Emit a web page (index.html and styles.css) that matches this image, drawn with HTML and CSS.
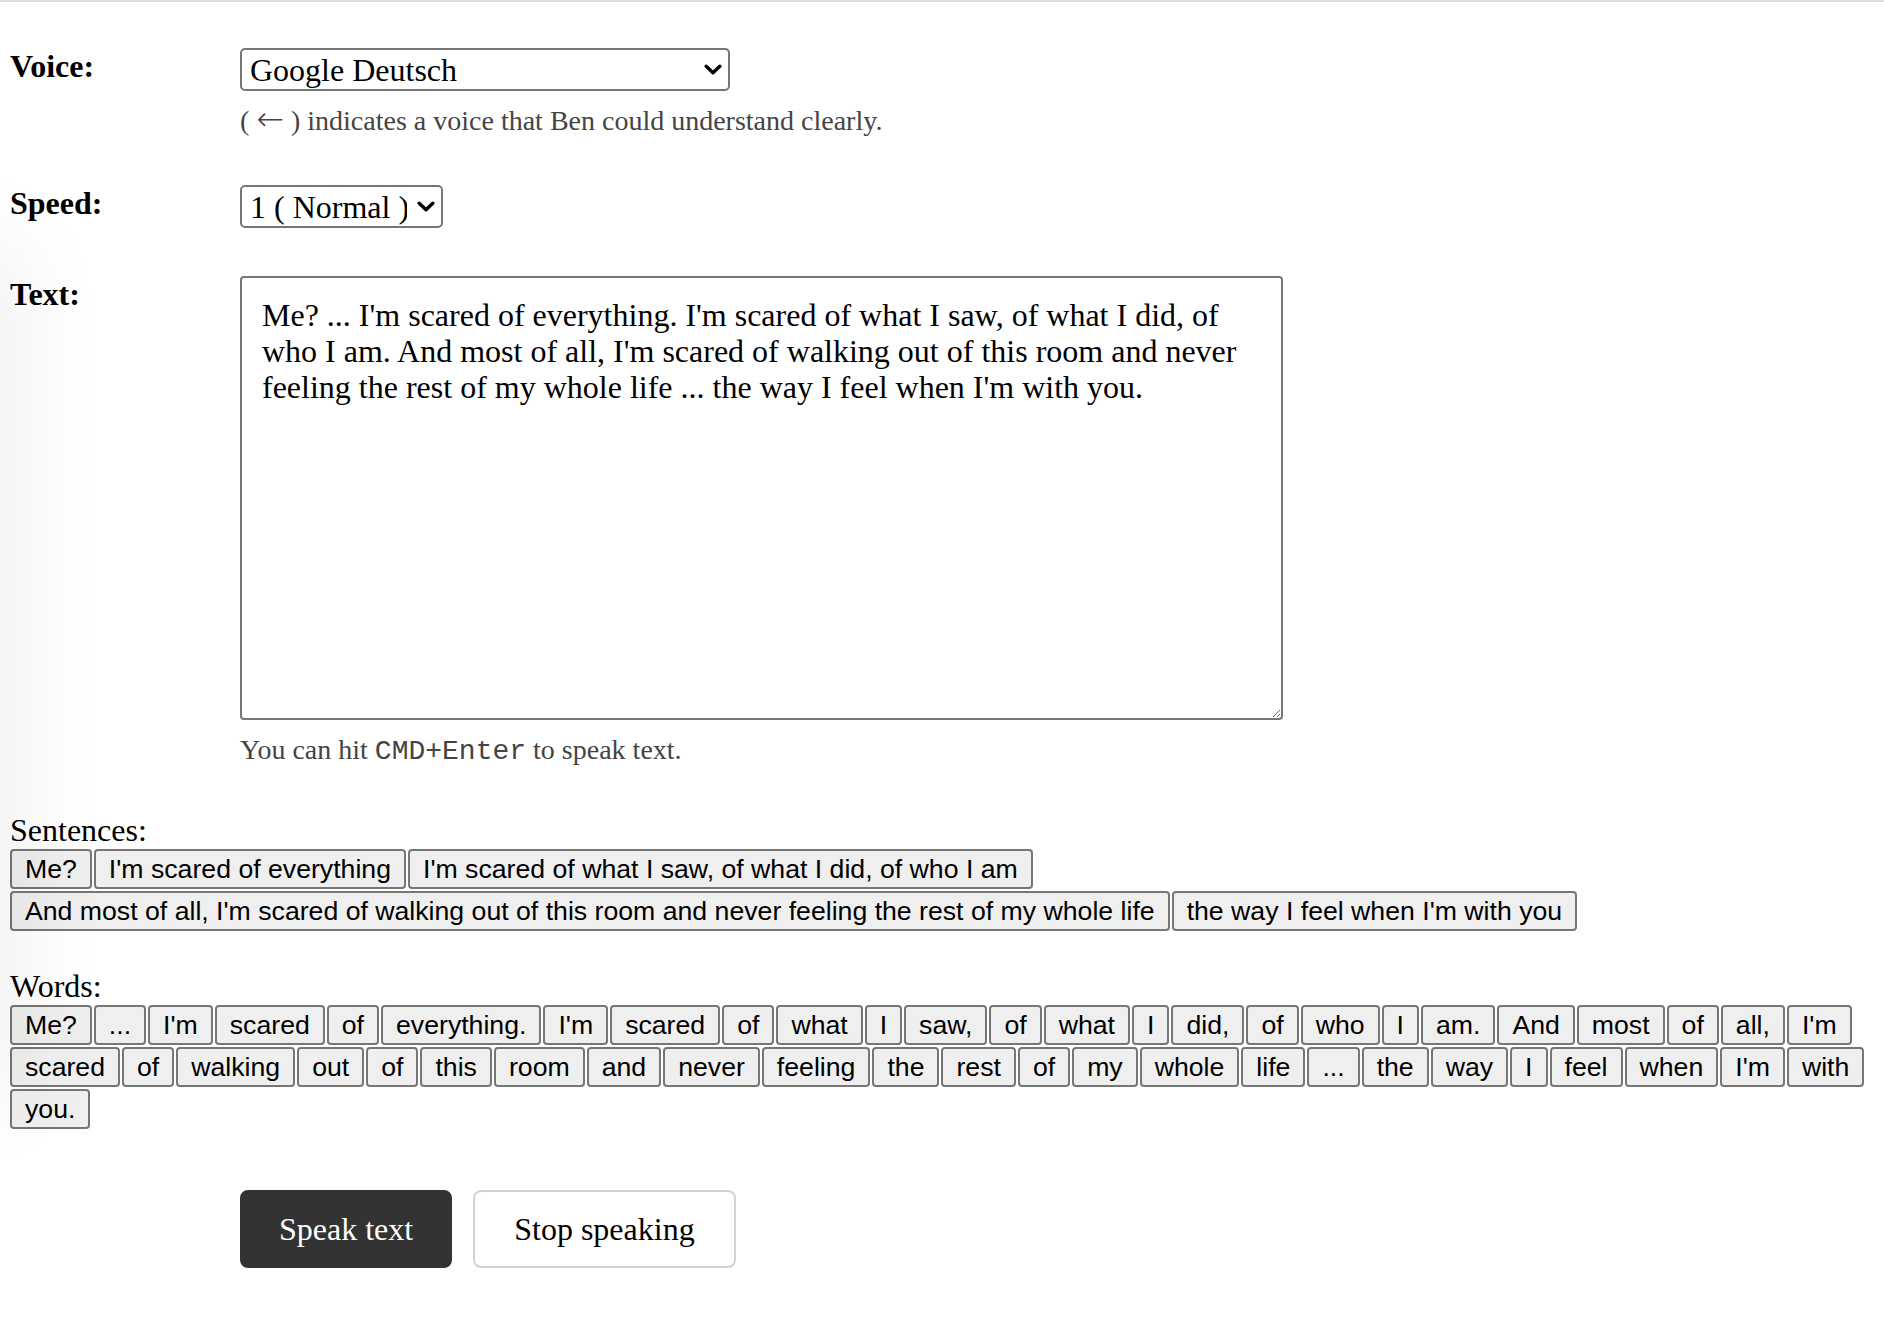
FILE: index.html
```html
<!DOCTYPE html>
<html lang="en">
<head>
<meta charset="utf-8">
<title>Speak text</title>
<link rel="stylesheet" href="styles.css">
</head>
<body>
<div class="edge-shade" aria-hidden="true"></div>
<div class="topline"></div>
<main class="page">
  <div class="form">
    <label class="label" for="voice">Voice:</label>
    <div class="field">
      <span class="select-wrap">
        <select id="voice" class="select select-voice">
          <option>Google Deutsch</option>
        </select>
        <svg class="chevron" width="18" height="11" viewBox="0 0 18 11" aria-hidden="true"><path d="M2.2 2.2 L9 8.8 L15.8 2.2" fill="none" stroke="#000" stroke-width="3.4" stroke-linecap="round" stroke-linejoin="round"/></svg>
      </span>
      <p class="hint">( <span class="arrow">←</span> ) indicates a voice that Ben could understand clearly.</p>
    </div>

    <label class="label" for="speed">Speed:</label>
    <div class="field">
      <span class="select-wrap">
        <select id="speed" class="select select-speed">
          <option>1 ( Normal )</option>
        </select>
        <svg class="chevron" width="18" height="11" viewBox="0 0 18 11" aria-hidden="true"><path d="M2.2 2.2 L9 8.8 L15.8 2.2" fill="none" stroke="#000" stroke-width="3.4" stroke-linecap="round" stroke-linejoin="round"/></svg>
      </span>
    </div>

    <label class="label" for="text">Text:</label>
    <div class="field">
      <textarea id="text" class="textarea">Me? ... I'm scared of everything. I'm scared of what I saw, of what I did, of who I am. And most of all, I'm scared of walking out of this room and never feeling the rest of my whole life ... the way I feel when I'm with you.</textarea>
      <p class="hint">You can hit <code class="kbd">CMD+Enter</code> to speak text.</p>
    </div>
  </div>

  <section class="group group-sentences">
    <div class="group-title">Sentences:</div>
    <div class="chips">
      <button class="chip">Me?</button><button class="chip">I'm scared of everything</button><button class="chip">I'm scared of what I saw, of what I did, of who I am</button><button class="chip">And most of all, I'm scared of walking out of this room and never feeling the rest of my whole life</button><button class="chip">the way I feel when I'm with you</button>
    </div>
  </section>

  <section class="group group-words">
    <div class="group-title">Words:</div>
    <div class="chips">
      <button class="chip">Me?</button><button class="chip">...</button><button class="chip">I'm</button><button class="chip">scared</button><button class="chip">of</button><button class="chip">everything.</button><button class="chip">I'm</button><button class="chip">scared</button><button class="chip">of</button><button class="chip">what</button><button class="chip">I</button><button class="chip">saw,</button><button class="chip">of</button><button class="chip">what</button><button class="chip">I</button><button class="chip">did,</button><button class="chip">of</button><button class="chip">who</button><button class="chip">I</button><button class="chip">am.</button><button class="chip">And</button><button class="chip">most</button><button class="chip">of</button><button class="chip">all,</button><button class="chip">I'm</button><button class="chip">scared</button><button class="chip">of</button><button class="chip">walking</button><button class="chip">out</button><button class="chip">of</button><button class="chip">this</button><button class="chip">room</button><button class="chip">and</button><button class="chip">never</button><button class="chip">feeling</button><button class="chip">the</button><button class="chip">rest</button><button class="chip">of</button><button class="chip">my</button><button class="chip">whole</button><button class="chip">life</button><button class="chip">...</button><button class="chip">the</button><button class="chip">way</button><button class="chip">I</button><button class="chip">feel</button><button class="chip">when</button><button class="chip">I'm</button><button class="chip">with</button><button class="chip">you.</button>
    </div>
  </section>

  <div class="actions">
    <button class="btn btn-primary">Speak text</button>
    <button class="btn btn-secondary">Stop speaking</button>
  </div>
</main>
</body>
</html>
```

FILE: styles.css
```css
html, body {
  margin: 0;
  padding: 0;
  background: #fff;
}

body {
  font-family: "Liberation Serif", "Times New Roman", serif;
  font-size: 32px;
  color: #000;
  min-height: 1320px;
  position: relative;
  overflow: hidden;
}

.edge-shade {
  position: fixed;
  left: -60px;
  top: 260px;
  width: 60px;
  height: 820px;
  box-shadow: 0 0 100px 14px rgba(0, 0, 0, 0.075);
  pointer-events: none;
}

.topline {
  height: 2px;
  background: #dedede;
}

.page {
  padding: 46px 0 0 10px;
}

.form {
  display: grid;
  grid-template-columns: 230px 1fr;
  row-gap: 48px;
  align-items: start;
}

.label {
  font-weight: bold;
  font-size: 32px;
  line-height: 36px;
}

.field {
  display: flex;
  flex-direction: column;
  align-items: flex-start;
}

.select-wrap {
  position: relative;
  display: inline-block;
}

.select {
  -webkit-appearance: none;
  appearance: none;
  box-sizing: border-box;
  height: 43px;
  margin: 0;
  padding: 0 34px 0 8px;
  font-family: "Liberation Serif", "Times New Roman", serif;
  font-size: 32px;
  color: #000;
  background: #fff;
  border: 2px solid #767676;
  border-radius: 5px;
}

.select-voice {
  width: 490px;
}

.select-speed {
  width: 203px;
}

.chevron {
  position: absolute;
  right: 8px;
  top: 16px;
  pointer-events: none;
}

.hint {
  margin: 14px 0 0;
  font-size: 28px;
  line-height: 32px;
  color: #444;
}

.arrow {
  font-family: "DejaVu Sans", sans-serif;
  font-size: 33px;
  line-height: 0;
  font-weight: 300;
}

.kbd {
  font-family: "Liberation Mono", "Courier New", monospace;
  font-size: 28px;
}

.textarea {
  display: block;
  box-sizing: border-box;
  width: 1043px;
  height: 444px;
  margin: 0;
  padding: 19px 20px 20px;
  font-family: "Liberation Serif", "Times New Roman", serif;
  font-size: 32px;
  line-height: 36px;
  color: #000;
  border: 2px solid #767676;
  border-radius: 4px;
  background: #fff;
}

.group-sentences {
  margin-top: 44px;
}

.group-words {
  margin-top: 37px;
}

.group-title {
  font-size: 32px;
  line-height: 37px;
}

.chips {
  display: flex;
  flex-wrap: wrap;
  gap: 2px;
  margin-right: 4px;
}

.chip {
  box-sizing: border-box;
  height: 40px;
  margin: 0;
  padding: 0 13px;
  font-family: "Liberation Sans", Arial, sans-serif;
  font-size: 26.67px;
  line-height: 36px;
  color: #000;
  background: #efefef;
  border: 2px solid #767676;
  border-radius: 4px;
}

.actions {
  display: flex;
  gap: 21px;
  margin-top: 61px;
  padding-left: 230px;
}

.btn {
  box-sizing: border-box;
  height: 78px;
  padding: 0 37px;
  font-family: "Liberation Serif", "Times New Roman", serif;
  font-size: 32px;
  line-height: 74px;
  border-radius: 8px;
  border: 2px solid;
}

.btn-primary {
  background: #333;
  border-color: #333;
  color: #fff;
}

.btn-secondary {
  background: #fff;
  border-color: #d2d2d2;
  color: #000;
  padding: 0 39px;
}
```
